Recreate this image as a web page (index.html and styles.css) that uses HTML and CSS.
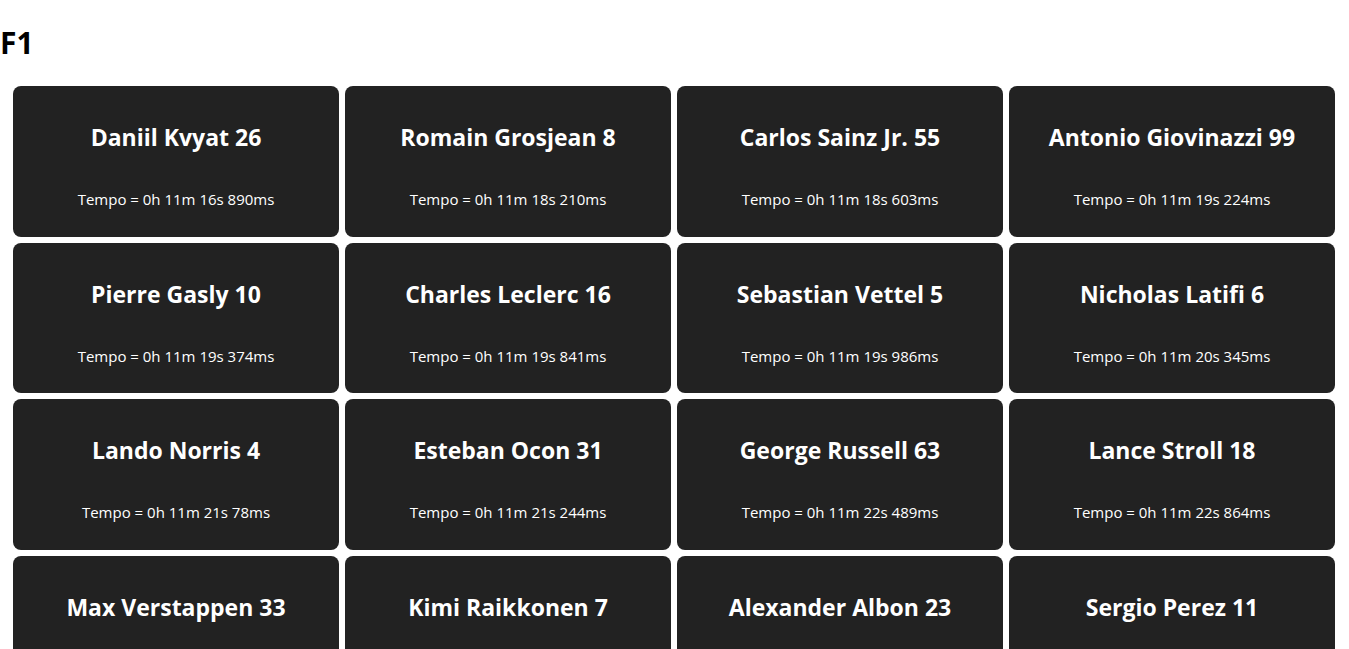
FILE: index.html
```html
<!DOCTYPE html>
<html>
<head>
<meta charset="utf-8">
<link rel="stylesheet" href="styles.css">
</head>
<body>
<h1 class="title">F1</h1>
<div class="grid">
  <div class="card"><h2 class="name">Daniil Kvyat 26</h2><p class="time">Tempo = 0h 11m 16s 890ms</p></div>
  <div class="card"><h2 class="name">Romain Grosjean 8</h2><p class="time">Tempo = 0h 11m 18s 210ms</p></div>
  <div class="card"><h2 class="name">Carlos Sainz Jr. 55</h2><p class="time">Tempo = 0h 11m 18s 603ms</p></div>
  <div class="card"><h2 class="name">Antonio Giovinazzi 99</h2><p class="time">Tempo = 0h 11m 19s 224ms</p></div>
  <div class="card"><h2 class="name">Pierre Gasly 10</h2><p class="time">Tempo = 0h 11m 19s 374ms</p></div>
  <div class="card"><h2 class="name">Charles Leclerc 16</h2><p class="time">Tempo = 0h 11m 19s 841ms</p></div>
  <div class="card"><h2 class="name">Sebastian Vettel 5</h2><p class="time">Tempo = 0h 11m 19s 986ms</p></div>
  <div class="card"><h2 class="name">Nicholas Latifi 6</h2><p class="time">Tempo = 0h 11m 20s 345ms</p></div>
  <div class="card"><h2 class="name">Lando Norris 4</h2><p class="time">Tempo = 0h 11m 21s 78ms</p></div>
  <div class="card"><h2 class="name">Esteban Ocon 31</h2><p class="time">Tempo = 0h 11m 21s 244ms</p></div>
  <div class="card"><h2 class="name">George Russell 63</h2><p class="time">Tempo = 0h 11m 22s 489ms</p></div>
  <div class="card"><h2 class="name">Lance Stroll 18</h2><p class="time">Tempo = 0h 11m 22s 864ms</p></div>
  <div class="card"><h2 class="name">Max Verstappen 33</h2><p class="time">Tempo = 0h 11m 23s 102ms</p></div>
  <div class="card"><h2 class="name">Kimi Raikkonen 7</h2><p class="time">Tempo = 0h 11m 23s 560ms</p></div>
  <div class="card"><h2 class="name">Alexander Albon 23</h2><p class="time">Tempo = 0h 11m 24s 017ms</p></div>
  <div class="card"><h2 class="name">Sergio Perez 11</h2><p class="time">Tempo = 0h 11m 24s 390ms</p></div>
</div>
</body>
</html>
```
FILE: styles.css
```css
body {
  margin: 0;
  font-family: "Open Sans", "Noto Sans", sans-serif;
  background: #ffffff;
  color: #000000;
}
.title {
  margin: 0 0 23px;
  padding-top: 23px;
  font-size: 30px;
  line-height: 40px;
  font-weight: 700;
}
.grid {
  display: grid;
  grid-template-columns: repeat(4, 326px);
  gap: 6px;
  padding: 0 14px 20px 13px;
}
.card {
  background: #222222;
  border-radius: 8px;
  height: 150.67px;
  box-sizing: border-box;
  padding-top: 36px;
  display: flex;
  flex-direction: column;
  align-items: center;
  color: #ffffff;
}
.name {
  margin: 0;
  font-size: 23px;
  line-height: 30px;
  font-weight: 700;
}
.time {
  margin: 37px 0 0;
  font-size: 15px;
  line-height: 20px;
}
```
